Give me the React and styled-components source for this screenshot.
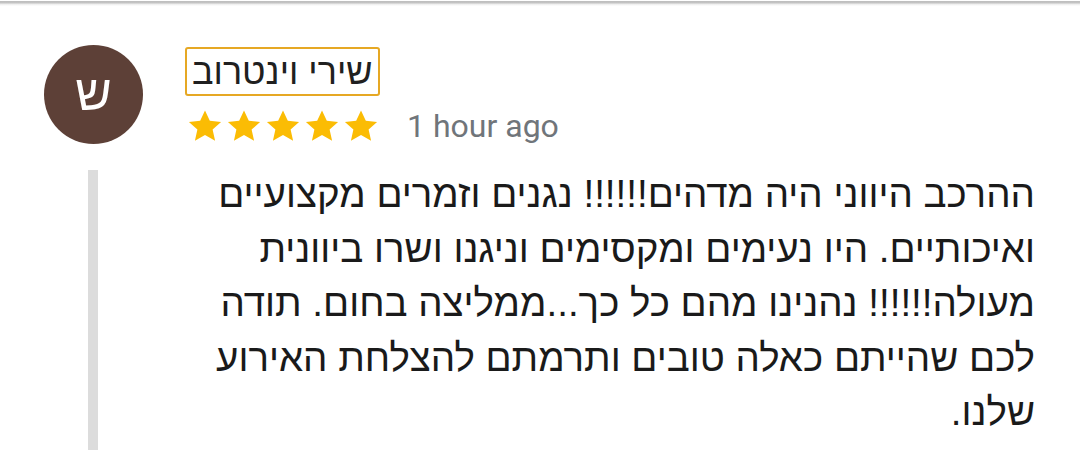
import React from 'react';
import styled, { createGlobalStyle } from 'styled-components';

const GlobalStyle = createGlobalStyle`
  html, body {
    margin: 0;
    padding: 0;
    background: #ffffff;
  }
  body {
    font-family: "Liberation Sans", Arial, sans-serif;
  }
`;

const lines = [
  'ההרכב היווני היה מדהים!!!!!! נגנים וזמרים מקצועיים',
  'ואיכותיים. היו נעימים ומקסימים וניגנו ושרו ביוונית',
  'מעולה!!!!!! נהנינו מהם כל כך...ממליצה בחום. תודה',
  'לכם שהייתם כאלה טובים ותרמתם להצלחת האירוע',
  'שלנו.',
];

function Star() {
  return (
    <svg width="34" height="31" viewBox="1 0.5 22 21.2">
      <path
        fill="#FBBC04"
        d="M12 0.8l3.3 7.1 7.7 0.8-5.8 5.2 1.7 7.6L12 17.6l-6.9 3.9 1.7-7.6L1 8.7l7.7-0.8z"
      />
    </svg>
  );
}

function App() {
  return (
    <Screen>
      <GlobalStyle />
      <TopEdge />
      <Header>
        <Avatar>ש</Avatar>
        <Meta>
          <NameBox dir="rtl">שירי וינטרוב</NameBox>
          <RatingRow>
            <Stars>
              {[0, 1, 2, 3, 4].map(i => <Star key={i} />)}
            </Stars>
            <Time>1 hour ago</Time>
          </RatingRow>
        </Meta>
      </Header>
      <Body>
        <QuoteBar />
        <ReviewText dir="rtl">
          {lines.map((l, i) => <Line key={i}>{l}</Line>)}
        </ReviewText>
      </Body>
    </Screen>
  );
}

const Screen = styled.div`
  width: 1080px;
  height: 462px;
  overflow: hidden;
  background: #fff;
`;

const TopEdge = styled.div`
  height: 6px;
  background: linear-gradient(#fff 0px, #fff 1px, #bdbdbd 1px, #c4c4c4 3px, #ececec 4px, #fff 6px);
`;

const Header = styled.div`
  display: flex;
  align-items: flex-start;
  padding: 39px 0 0 44px;
`;

const Avatar = styled.div`
  width: 99px;
  height: 99px;
  border-radius: 50%;
  background: #5d4037;
  color: #fff;
  display: flex;
  align-items: center;
  justify-content: center;
  font-size: 50px;
  line-height: 1;
  padding-bottom: 4px;
  box-sizing: border-box;
`;

const Meta = styled.div`
  display: flex;
  flex-direction: column;
  align-items: flex-start;
  margin-left: 42px;
  margin-top: 2px;
`;

const NameBox = styled.div`
  border: 2px solid #e6a824;
  border-radius: 3px;
  height: 49px;
  box-sizing: border-box;
  padding: 0 5px;
  display: flex;
  align-items: center;
  font-size: 36px;
  color: #202020;
  white-space: nowrap;
`;

const RatingRow = styled.div`
  display: flex;
  align-items: center;
  margin-top: 10px;
  margin-left: 3px;
`;

const Stars = styled.div`
  display: flex;
  gap: 5px;
`;

const Time = styled.span`
  font-family: Roboto, "Liberation Sans", sans-serif;
  font-size: 32px;
  color: #70757a;
  margin-left: 29px;
  margin-top: 1px;
`;

const Body = styled.div`
  display: flex;
  align-items: stretch;
  padding: 25px 45px 0 88px;
`;

const QuoteBar = styled.div`
  width: 10px;
  height: 280px;
  background: #dcdcdc;
  flex-shrink: 0;
`;

const ReviewText = styled.div`
  flex: 1;
  text-align: right;
  color: #1a1a1a;
  font-size: 38.5px;
  line-height: 54.5px;
  margin-top: -3px;
`;

const Line = styled.div`
  white-space: nowrap;
`;

export default App;
